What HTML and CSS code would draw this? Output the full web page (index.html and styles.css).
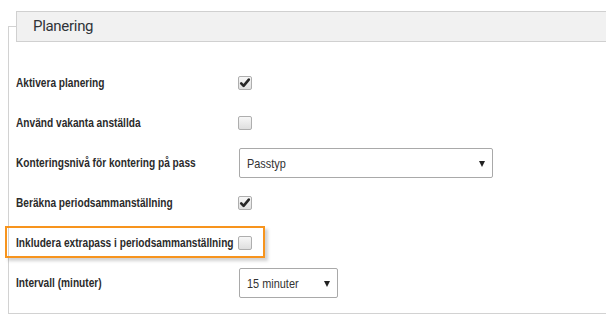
FILE: index.html
```html
<!DOCTYPE html>
<html lang="sv">
<head>
<meta charset="utf-8">
<title>Planering</title>
<link rel="stylesheet" href="styles.css">
</head>
<body>
<fieldset class="panel">
  <legend class="panel-title">Planering</legend>
  <div class="form">
    <div class="row">
      <span class="label">Aktivera planering</span>
      <span class="check is-checked"><svg viewBox="0 0 14 14" width="14" height="14"><path d="M3.2 7.4 L5.6 9.8 L10.8 3.6" fill="none" stroke="#262626" stroke-width="2.6" stroke-linecap="round" stroke-linejoin="round"/></svg></span>
    </div>
    <div class="row">
      <span class="label">Använd vakanta anställda</span>
      <span class="check"></span>
    </div>
    <div class="row">
      <span class="label">Konteringsnivå för kontering på pass</span>
      <span class="select select-wide"><span class="select-text">Passtyp</span><i class="arrow"></i></span>
    </div>
    <div class="row">
      <span class="label">Beräkna periodsammanställning</span>
      <span class="check is-checked"><svg viewBox="0 0 14 14" width="14" height="14"><path d="M3.2 7.4 L5.6 9.8 L10.8 3.6" fill="none" stroke="#262626" stroke-width="2.6" stroke-linecap="round" stroke-linejoin="round"/></svg></span>
    </div>
    <div class="row row-highlight">
      <span class="label">Inkludera extrapass i periodsammanställning</span>
      <span class="check"></span>
    </div>
    <div class="row">
      <span class="label">Intervall (minuter)</span>
      <span class="select select-narrow"><span class="select-text">15 minuter</span><i class="arrow"></i></span>
    </div>
  </div>
</fieldset>
</body>
</html>
```
FILE: styles.css
```css
html, body {
  margin: 0;
  padding: 0;
  background: #ffffff;
  overflow: hidden;
}

body {
  width: 606px;
  height: 319px;
}

.panel {
  margin: 11px -30px 0 8px;
  padding: 26px 0 15px 7px;
  border: 1px solid #d2d2d2;
  border-right: none;
  min-width: 0;
}

.panel-title {
  box-sizing: border-box;
  width: 100%;
  height: 31px;
  padding: 0 0 0 16px;
  margin: 0;
  background-color: #f1f1f1;
  border: 1px solid #d0d0d0;
  border-right: none;
  font-family: Roboto, "Liberation Sans", sans-serif;
  font-size: 15px;
  letter-spacing: -0.3px;
  line-height: 29px;
  color: #2f3338;
}

.form {
  display: flex;
  flex-direction: column;
  gap: 10px;
}

.row {
  display: grid;
  grid-template-columns: 223px auto;
  align-items: center;
  height: 30px;
  justify-items: start;
}

.label {
  display: inline-block;
  white-space: nowrap;
  font-family: "Liberation Sans", Arial, sans-serif;
  font-weight: bold;
  font-size: 12px;
  color: #2b2b2b;
  transform: scaleX(0.845);
  transform-origin: left center;
}

.check {
  box-sizing: border-box;
  width: 14px;
  height: 14px;
  border: 1px solid #aeaeae;
  border-radius: 2px;
  background: linear-gradient(#f7f7f7, #dedede);
  display: flex;
  align-items: center;
  justify-content: center;
  overflow: hidden;
  margin-left: -1px;
}

.check svg {
  display: block;
  flex: none;
}

.select {
  box-sizing: border-box;
  height: 30px;
  border: 1px solid #a9a9a9;
  border-radius: 2px;
  background: #ffffff;
  display: flex;
  align-items: center;
  justify-content: space-between;
  padding: 0 7px 0 7px;
  color: #333333;
}

.select-text {
  display: inline-block;
  white-space: nowrap;
  font-family: "Liberation Sans", Arial, sans-serif;
  font-size: 13px;
  transform: scaleX(0.84);
  transform-origin: left center;
}

.select-wide {
  width: 254px;
}

.select-narrow {
  width: 99px;
}

.arrow {
  width: 0;
  height: 0;
  border-left: 3px solid transparent;
  border-right: 3px solid transparent;
  border-top: 6px solid #222222;
  margin-top: 1px;
}

.row-highlight {
  position: relative;
}

.row-highlight::after {
  content: "";
  position: absolute;
  left: -11px;
  top: -2px;
  width: 260px;
  height: 32px;
  box-sizing: border-box;
  border: 2.5px solid #f7941d;
  box-shadow: 3px 3px 3px rgba(0, 0, 0, 0.18);
  pointer-events: none;
}
```
